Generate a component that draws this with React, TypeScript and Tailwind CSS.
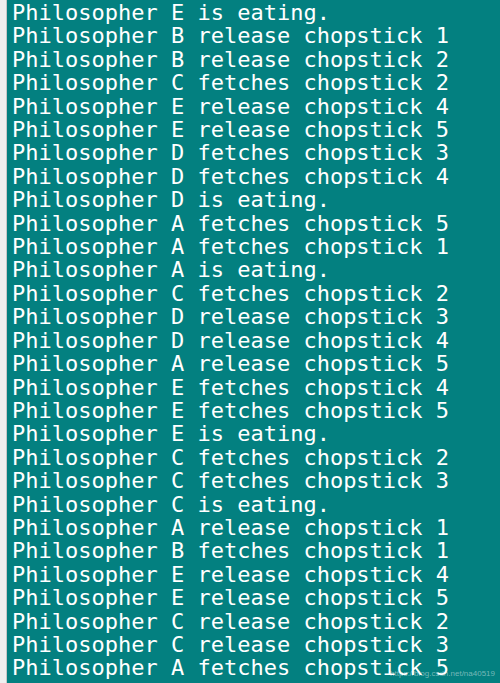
const lines = [
  "Philosopher E is eating.",
  "Philosopher B release chopstick 1",
  "Philosopher B release chopstick 2",
  "Philosopher C fetches chopstick 2",
  "Philosopher E release chopstick 4",
  "Philosopher E release chopstick 5",
  "Philosopher D fetches chopstick 3",
  "Philosopher D fetches chopstick 4",
  "Philosopher D is eating.",
  "Philosopher A fetches chopstick 5",
  "Philosopher A fetches chopstick 1",
  "Philosopher A is eating.",
  "Philosopher C fetches chopstick 2",
  "Philosopher D release chopstick 3",
  "Philosopher D release chopstick 4",
  "Philosopher A release chopstick 5",
  "Philosopher E fetches chopstick 4",
  "Philosopher E fetches chopstick 5",
  "Philosopher E is eating.",
  "Philosopher C fetches chopstick 2",
  "Philosopher C fetches chopstick 3",
  "Philosopher C is eating.",
  "Philosopher A release chopstick 1",
  "Philosopher B fetches chopstick 1",
  "Philosopher E release chopstick 4",
  "Philosopher E release chopstick 5",
  "Philosopher C release chopstick 2",
  "Philosopher C release chopstick 3",
  "Philosopher A fetches chopstick 5",
];

export default function App() {
  return (
    <div className="flex h-[683px] w-[500px] overflow-hidden bg-[#f0f0f0]">
      {/* window edge */}
      <div className="w-[7px] shrink-0 border-r border-[#c8c8c8] bg-[#f0f0f0]" />

      {/* console */}
      <div className="relative flex-1 overflow-hidden bg-[#038080] pl-[5px] pt-[1px]">
        <div className="font-['DejaVu_Sans_Mono',monospace] text-[22px] leading-[23.4px] text-white whitespace-pre">
          {lines.map((line, i) => (
            <div key={i}>{line}</div>
          ))}
        </div>

        {/* watermark */}
        <span className="absolute bottom-[3px] right-[5px] font-['Liberation_Sans',sans-serif] text-[8px] text-white/45">
          https://blog.csdn.net/na40519
        </span>
      </div>
    </div>
  );
}
